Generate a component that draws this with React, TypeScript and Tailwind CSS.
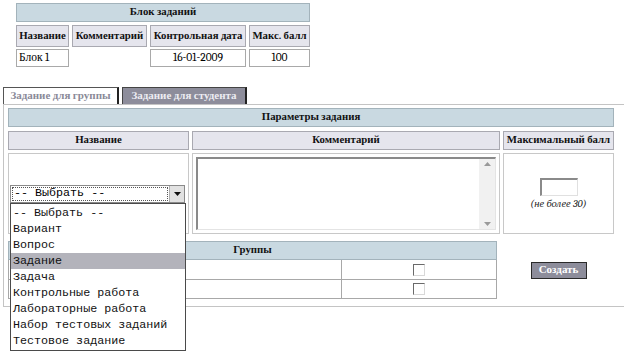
import React from "react";

function HeaderBar({ children, className = "" }: { children: React.ReactNode; className?: string }) {
  return (
    <div
      className={
        "h-[19px] bg-[#c9d9e1] border border-[#a3b3bb] flex items-center justify-center font-bold text-[10.8px] text-[#111] " +
        className
      }
    >
      {children}
    </div>
  );
}

function HCell({ w, children }: { w: string; children: React.ReactNode }) {
  return (
    <div
      className={
        w +
        " h-full bg-[#e5e5ed] border border-[#a9a9b1] flex items-center justify-center font-bold text-[10.8px] text-[#111] whitespace-nowrap"
      }
    >
      {children}
    </div>
  );
}

const items = [
  "-- Выбрать --",
  "Вариант",
  "Вопрос",
  "Задание",
  "Задача",
  "Контрольные работа",
  "Лабораторные работа",
  "Набор тестовых заданий",
  "Тестовое задание",
];

function Checkbox() {
  return (
    <div className="w-[12px] h-[12px] border-t border-l border-[#6a6a6a] border-r-[#d8d8d8] border-b-[#d8d8d8] border-r border-b bg-white" />
  );
}

export default function App() {
  return (
    <div className="w-[624px] h-[356px] bg-white relative overflow-hidden font-serif text-black">
      {/* Top block table */}
      <div className="ml-[16px] pt-[3px] w-[294px] flex flex-col">
        <HeaderBar>Блок заданий</HeaderBar>
        <div className="flex gap-[3px] mt-[3px] h-[22px]">
          <HCell w="w-[53px]">Название</HCell>
          <HCell w="w-[75px]">Комментарий</HCell>
          <HCell w="w-[96px]">Контрольная дата</HCell>
          <HCell w="w-[61px]">Макс. балл</HCell>
        </div>
        <div className="flex gap-[3px] mt-[2px] h-[18px] text-[11.5px]">
          <div className="w-[53px] h-full border border-[#a9a9a9] flex items-center pl-[2px]">Блок 1</div>
          <div className="w-[75px] h-full" />
          <div className="w-[96px] h-full border border-[#a9a9a9] flex items-center justify-center">16-01-2009</div>
          <div className="w-[61px] h-full border border-[#a9a9a9] flex items-center justify-center">100</div>
        </div>
      </div>

      {/* Tabs */}
      <div className="ml-[3px] mt-[20px] flex gap-[3px] h-[17px]">
        <div className="w-[116px] h-full bg-white border-t border-l border-[#555] border-r-2 border-r-[#222] flex items-center justify-center font-bold text-[11px] text-[#8a8a98] whitespace-nowrap">
          Задание для группы
        </div>
        <div className="w-[125px] h-full bg-[#8d8d9b] border-t border-l border-[#444] border-r-2 border-r-[#222] flex items-center justify-center font-bold text-[11px] text-[#ececf2] whitespace-nowrap">
          Задание для студента
        </div>
      </div>

      {/* Panel */}
      <div className="ml-[3px] w-[640px] border-t border-l border-b border-[#c4c4c4] pl-[4px] pt-[3px] pb-[7px]">
        <HeaderBar className="w-[606px]">Параметры задания</HeaderBar>
        <div className="flex gap-[3px] mt-[4px] h-[19px]">
          <HCell w="w-[181px]">Название</HCell>
          <HCell w="w-[308px]">Комментарий</HCell>
          <HCell w="w-[111px]">Максимальный балл</HCell>
        </div>
        <div className="flex gap-[3px] mt-[3px] h-[81px]">
          {/* select cell */}
          <div className="w-[181px] h-full border border-[#c8c8c8] flex items-center pl-[1px]">
            <div className="w-[175px] h-[18px] border border-[#8a8a8a] flex bg-white">
              <div className="flex-1 m-[1px] border border-dotted border-[#555] flex items-center pl-[1px] font-mono text-[11.7px] whitespace-pre">
                -- Выбрать --
              </div>
              <div className="w-[15px] h-full bg-[#e2e2e2] border-l border-[#b0b0b0] flex items-center justify-center">
                <svg width="7" height="4" viewBox="0 0 7 4">
                  <path d="M0 0 H7 L3.5 4 Z" fill="#111" />
                </svg>
              </div>
            </div>
          </div>
          {/* textarea cell */}
          <div className="w-[308px] h-full border border-[#c8c8c8] p-[3px]">
            <div className="w-full h-full border-t-2 border-l-2 border-[#8a8a8a] border-r border-b border-r-[#e4e4e4] border-b-[#e4e4e4] flex bg-white">
              <div className="flex-1" />
              <div className="w-[16px] h-full bg-[#f1f1f1] flex flex-col justify-between items-center py-[3px]">
                <svg width="7" height="4" viewBox="0 0 7 4">
                  <path d="M0 4 H7 L3.5 0 Z" fill="#9a9a9a" />
                </svg>
                <svg width="7" height="4" viewBox="0 0 7 4">
                  <path d="M0 0 H7 L3.5 4 Z" fill="#9a9a9a" />
                </svg>
              </div>
            </div>
          </div>
          {/* max cell */}
          <div className="w-[111px] h-full border border-[#c8c8c8] flex flex-col items-center pt-[24px]">
            <div className="w-[38px] h-[18px] border-t-2 border-l-2 border-[#8a8a8a] border-r border-b border-r-[#e0e0e0] border-b-[#e0e0e0] bg-white" />
            <div className="mt-[2px] italic text-[10.5px] leading-[13px] text-[#222]">(не более 30)</div>
          </div>
        </div>

        {/* Groups */}
        <div className="flex gap-[6px] mt-[7px]">
          <div className="w-[489px] flex flex-col">
            <HeaderBar>Группы</HeaderBar>
            <div className="flex h-[20px] border-x border-b border-[#a8a8a8]">
              <div className="w-[333px] h-full border-r border-[#a8a8a8]" />
              <div className="flex-1 flex items-center justify-center">
                <Checkbox />
              </div>
            </div>
            <div className="flex h-[19px] border-x border-b border-[#a8a8a8]">
              <div className="w-[333px] h-full border-r border-[#a8a8a8]" />
              <div className="flex-1 flex items-center justify-center">
                <Checkbox />
              </div>
            </div>
          </div>
          <div className="w-[111px] flex items-center justify-center">
            <div className="w-[56px] h-[17px] bg-[#8d8d9b] border border-[#2a2a2a] flex items-center justify-center font-bold text-[11px] text-white">
              Создать
            </div>
          </div>
        </div>
      </div>

      {/* Open dropdown list */}
      <div className="absolute left-[10px] top-[203px] w-[176px] border border-[#4a4a4a] bg-white pt-[1px] pb-[1px] font-mono text-[11.7px] text-[#111]">
        {items.map((it) => (
          <div
            key={it}
            className={
              "h-[16px] leading-[16px] pl-[2px] whitespace-pre " + (it === "Задание" ? "bg-[#b3b3bb]" : "")
            }
          >
            {it}
          </div>
        ))}
      </div>
    </div>
  );
}
